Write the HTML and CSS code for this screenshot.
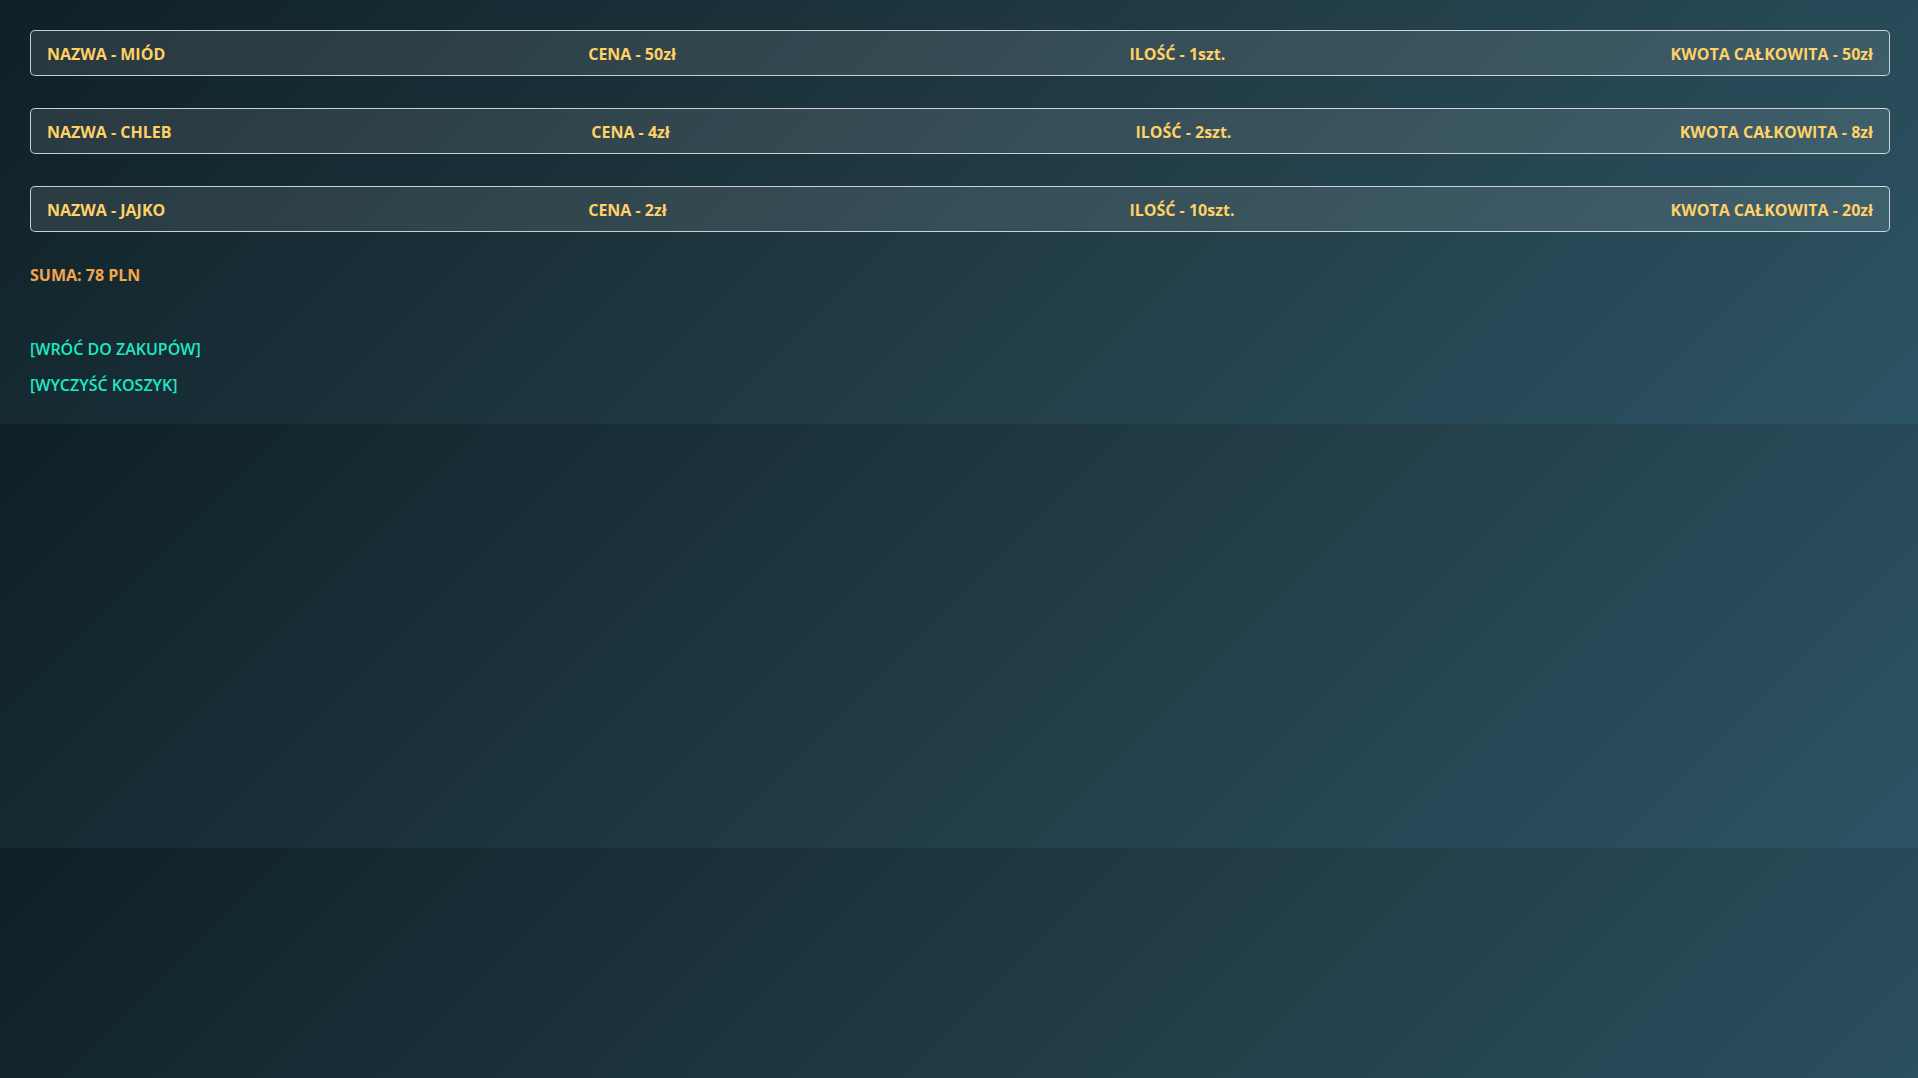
FILE: index.html
```html
<!DOCTYPE html>
<html lang="pl">
<head>
<meta charset="utf-8">
<title>Koszyk</title>
<link rel="stylesheet" href="styles.css">
</head>
<body>
<main class="cart">
  <div class="item">
    <span class="cell">NAZWA - MIÓD</span>
    <span class="cell">CENA - 50zł</span>
    <span class="cell">ILOŚĆ - 1szt.</span>
    <span class="cell">KWOTA CAŁKOWITA - 50zł</span>
  </div>
  <div class="item">
    <span class="cell">NAZWA - CHLEB</span>
    <span class="cell">CENA - 4zł</span>
    <span class="cell">ILOŚĆ - 2szt.</span>
    <span class="cell">KWOTA CAŁKOWITA - 8zł</span>
  </div>
  <div class="item">
    <span class="cell">NAZWA - JAJKO</span>
    <span class="cell">CENA - 2zł</span>
    <span class="cell">ILOŚĆ - 10szt.</span>
    <span class="cell">KWOTA CAŁKOWITA - 20zł</span>
  </div>
  <p class="sum">SUMA: 78 PLN</p>
  <nav class="actions">
    <a class="action" href="#">[WRÓĆ DO ZAKUPÓW]</a>
    <a class="action" href="#">[WYCZYŚĆ KOSZYK]</a>
  </nav>
</main>
</body>
</html>
```
FILE: styles.css
```css
body {
  margin: 0;
  padding: 30px 28px 28px 30px;
  background: linear-gradient(135deg, #0f2027, #203a43, #2c5364);
  font-family: "Open Sans", "Noto Sans", sans-serif;
  font-weight: 700;
  font-size: 16px;
  line-height: 22px;
}

.cart {
  display: flex;
  flex-direction: column;
}

.item {
  display: grid;
  grid-template-columns: 1fr 1fr 1fr auto;
  padding: 12px 16px 10px 16px;
  margin-bottom: 32px;
  border: 1px solid rgba(255, 255, 255, 0.75);
  border-radius: 5px;
  background: rgba(255, 255, 255, 0.1);
  color: #ffd166;
}

.cell {
  white-space: nowrap;
}

.sum {
  margin: 0 0 52px;
  color: #f4a64a;
}

.actions {
  display: flex;
  flex-direction: column;
  align-items: flex-start;
  gap: 14px;
}

.action {
  color: #1de9c4;
  font-weight: 600;
  text-decoration: none;
}
```
